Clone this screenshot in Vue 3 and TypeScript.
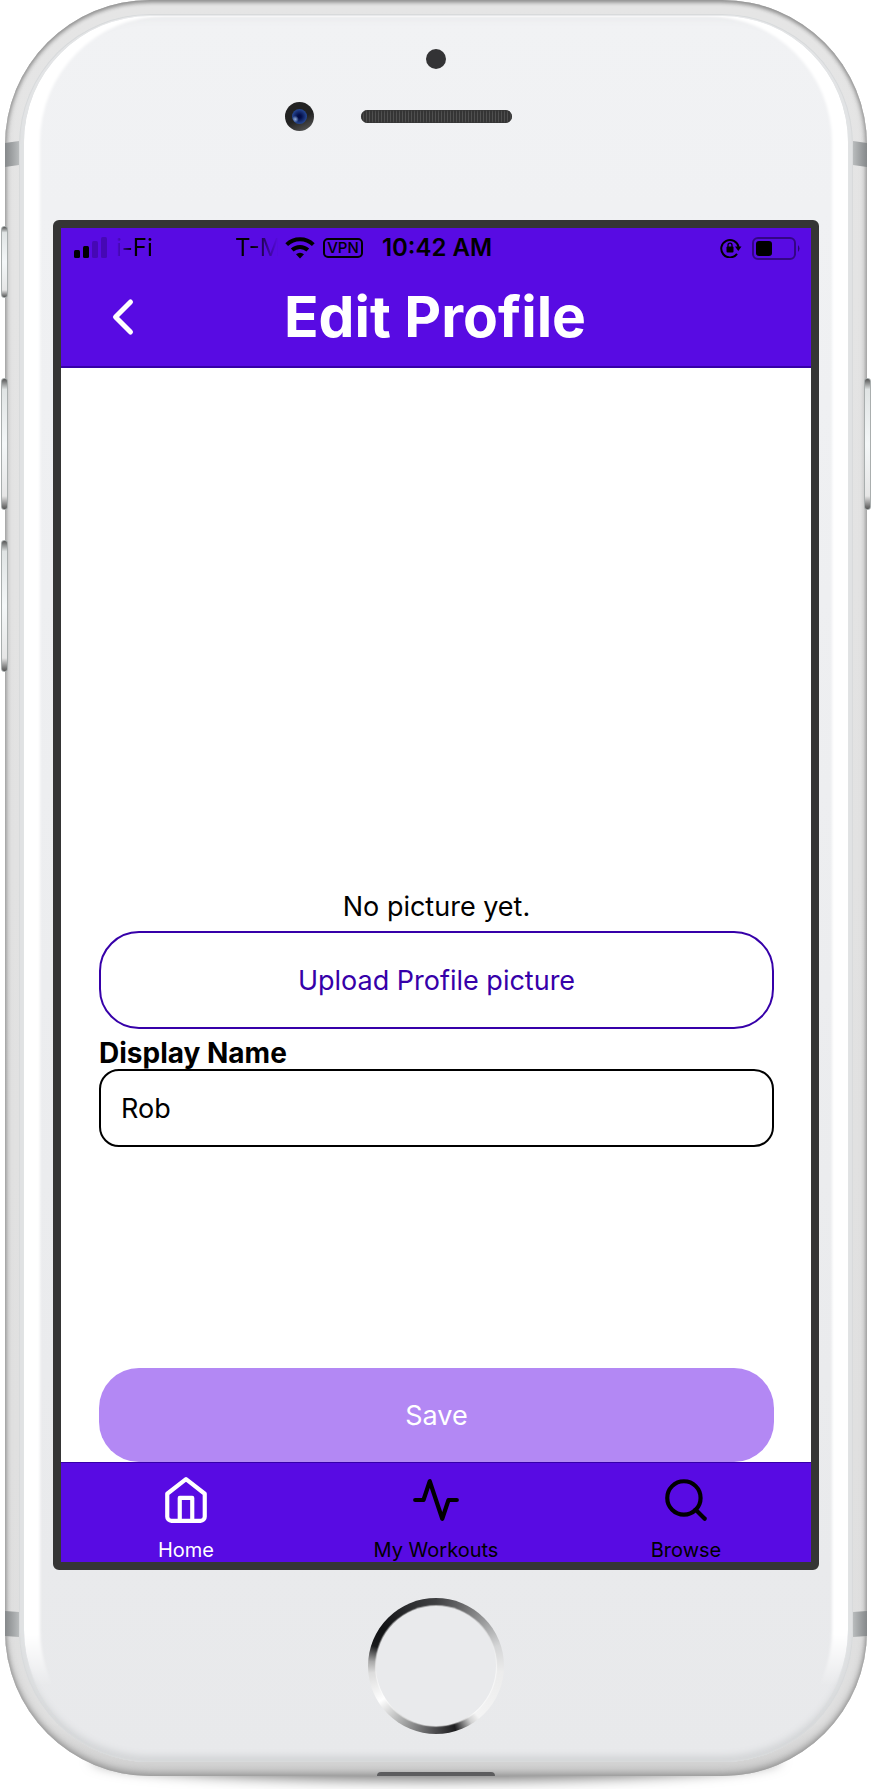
<script setup lang="ts">
import { ref } from 'vue'

interface Tab {
  id: string
  label: string
  paths: string[]
}

const displayName = ref('Rob')
const activeTab = ref('home')

const tabs: Tab[] = [
  {
    id: 'home',
    label: 'Home',
    paths: ['M3 9l9-7 9 7v11a2 2 0 0 1-2 2H5a2 2 0 0 1-2-2z', 'M9 22V11h6v11'],
  },
  { id: 'workouts', label: 'My Workouts', paths: ['M22 12h-4l-3 9L9 3l-3 9H2'] },
  { id: 'browse', label: 'Browse', paths: ['M19 11a8 8 0 1 1-16 0a8 8 0 0 1 16 0z', 'M21 21l-4.35-4.35'] },
]
</script>

<template>
  <div class="stage">
    <div class="phone">
      <span class="key key-left mute"></span>
      <span class="key key-left volume-up"></span>
      <span class="key key-left volume-down"></span>
      <span class="key key-right power"></span>
      <div class="shell">
        <span class="band band-top band-left"></span>
        <span class="band band-top band-right"></span>
        <span class="band band-bottom band-left"></span>
        <span class="band band-bottom band-right"></span>
        <span class="connector"></span>
        <div class="face">
          <div class="forehead">
            <span class="sensor"></span>
            <div class="earpiece">
              <span class="camera"></span>
              <span class="speaker"></span>
            </div>
          </div>

          <div class="screen">
            <div class="status">
              <div class="status-left">
                <svg class="signal" viewBox="0 0 34 22" aria-hidden="true">
                  <rect x="0" y="13" width="6" height="8" rx="1.5" />
                  <rect x="9" y="9" width="6" height="12" rx="1.5" />
                  <rect x="18" y="4" width="6" height="17" rx="1.5" opacity=".2" />
                  <rect x="27" y="0" width="6" height="21" rx="1.5" opacity=".2" />
                </svg>
                <span class="carrier">
                  <span>i-Fi</span>
                  <span class="carrier-next">T-M</span>
                </span>
                <svg class="wifi" viewBox="0 0 30 22" aria-hidden="true">
                  <path d="M15 21.5l-4-4.2a6 6 0 0 1 8 0z" />
                  <path d="M7.2 13a11.5 11.5 0 0 1 15.6 0M1.7 7.6a19.2 19.2 0 0 1 26.6 0" fill="none" stroke="#000" stroke-width="4" />
                </svg>
                <span class="vpn">VPN</span>
              </div>
              <span class="time">10:42 AM</span>
              <div class="status-right">
                <svg class="lock" viewBox="0 0 22 20" aria-hidden="true">
                  <path d="M17 15.8A8.7 8.7 0 1 1 18.5 9" fill="none" stroke="#000" stroke-width="2" />
                  <path d="M15 8.5h6.5L18.3 13z" />
                  <rect x="6.5" y="8.5" width="7" height="6" rx="1" />
                  <path d="M8 9V7.2a2 2 0 0 1 4 0V9" fill="none" stroke="#000" stroke-width="1.3" />
                </svg>
                <svg class="battery" viewBox="0 0 48 23" aria-hidden="true">
                  <rect x="1" y="1" width="42" height="21" rx="5" fill="none" stroke="#000" stroke-opacity=".42" stroke-width="2" />
                  <rect x="4" y="4" width="16" height="15" rx="3" />
                  <path d="M46 8q3 3.500 0 7z" opacity=".5" />
                </svg>
              </div>
            </div>

            <header class="header">
              <button class="back" type="button" aria-label="Back">
                <svg viewBox="0 0 24 24"><path d="M15 18l-6-6 6-6" /></svg>
              </button>
              <h1>Edit Profile</h1>
            </header>

            <form class="content" @submit.prevent>
              <div class="picture"><p>No picture yet.</p></div>
              <button class="upload" type="button">Upload Profile picture</button>
              <label for="display-name">Display Name</label>
              <input id="display-name" v-model="displayName" type="text" />
              <button class="save" type="submit">Save</button>
            </form>

            <nav class="tabs">
              <a
                v-for="tab in tabs"
                :key="tab.id"
                :href="'#' + tab.id"
                :class="{ active: tab.id === activeTab }"
                @click.prevent="activeTab = tab.id"
              >
                <svg viewBox="0 0 24 24" aria-hidden="true">
                  <path v-for="d in tab.paths" :key="d" :d="d" />
                </svg>
                <span>{{ tab.label }}</span>
              </a>
            </nav>
          </div>

          <div class="chin">
            <button class="home-button" type="button" aria-label="Home button"><span></span></button>
          </div>
        </div>
      </div>
    </div>
  </div>
</template>

<style>
body {
  margin: 0;
  background: #fff;
}
</style>

<style scoped>
* {
  box-sizing: border-box;
}

button,
input {
  font: inherit;
  margin: 0;
  cursor: pointer;
}

.stage {
  padding: 0 4px 13px 5px;
  overflow: hidden;
  font: 400 27px/34px Inter, "Liberation Sans", sans-serif;
  color: #000;
}

.phone {
  position: relative;
}

.phone::before {
  content: "";
  position: absolute;
  inset: auto 90px 0;
  height: 40px;
  border-radius: 50%;
  box-shadow: 0 2px 14px 2px rgba(0, 0, 0, 0.55);
}

.shell {
  position: relative;
  padding: 14px;
  border-radius: 145px;
  background: linear-gradient(#e5e5e5, #dfdfdf 97%, #cfcfcf);
  box-shadow:
    inset 0 3px 4px -1px #8f8f8f,
    inset 0 -4px 8px -1px #9c9c9c,
    inset 0 0 5px #8e8e8e;
}

.key {
  position: absolute;
  z-index: 1;
  width: 7px;
  border-radius: 3px;
  border: 1px solid #a9aeae;
  background: linear-gradient(#555, #e0e4e4 8%, #f4f7f8 50%, #e6e6e6 90%, #555);
}

.key-left {
  left: -4px;
}

.key-right {
  right: -4px;
}

.mute {
  top: 226px;
  height: 72px;
}

.volume-up,
.power {
  top: 378px;
  height: 132px;
}

.volume-down {
  top: 540px;
  height: 132px;
}

.band {
  position: absolute;
  width: 14px;
  height: 26px;
  background: linear-gradient(90deg, #85888a, #b9bcbd);
}

.band-left {
  left: 0;
}

.band-right {
  right: 0;
  transform: scaleX(-1);
}

.band-top {
  top: 141px;
  clip-path: polygon(0 2px, 100% 0, 100% 24px, 0 100%);
}

.band-bottom {
  bottom: 139px;
  clip-path: polygon(0 0, 100% 1px, 100% 100%, 0 25px);
}

.connector {
  position: absolute;
  bottom: 0;
  left: 50%;
  width: 118px;
  height: 4px;
  margin-left: -59px;
  border-radius: 8px 8px 0 0;
  background: #5c5c5e;
}

.face {
  position: relative;
  border-radius: 131px;
  background: linear-gradient(#f1f2f4, #e8e9eb);
  box-shadow:
    inset 0 0 0 1px #d8dadb,
    inset 0 4px 8px #e5e6e8,
    inset 0 -6px 7px #d2d4d6,
    inset 5px 0 0 #e2e4e5,
    inset -5px 0 0 #e2e4e5;
}

.face::before {
  content: "";
  position: absolute;
  inset: 2px 5px 6px;
  border-radius: 126px;
  box-shadow: inset 16px 0 3px #fff, inset -16px 0 3px #fff;
  mask-image: linear-gradient(#000 93%, transparent 96%);
}

.forehead {
  position: relative;
  display: flex;
  flex-direction: column;
  align-items: center;
  gap: 33px;
  height: 206px;
  padding-top: 35px;
}

.sensor {
  width: 20px;
  height: 20px;
  border-radius: 50%;
  background: #333335;
}

.earpiece {
  display: grid;
  grid-template-columns: 1fr auto 1fr;
  align-items: center;
  gap: 47px;
  width: 100%;
}

.camera {
  justify-self: end;
  display: grid;
  width: 29px;
  height: 29px;
  padding: 7px;
  border-radius: 50%;
  background: linear-gradient(155deg, #222 55%, #606060);
}

.camera::before {
  content: "";
  border-radius: 50%;
  background:
    radial-gradient(circle at 22% 68%, #8fadda, transparent 22%),
    radial-gradient(circle, #020c45 15%, #294d9b 75%);
}

.speaker {
  width: 151px;
  height: 13px;
  border-radius: 7px;
  background: repeating-linear-gradient(90deg, #353535 0 2px, #505050 2px 3px);
  box-shadow: inset 0 0 2px 1px #353535;
}

.screen {
  position: relative;
  display: flex;
  flex-direction: column;
  margin: 0 34px;
  border: 8px solid #353535;
  border-radius: 6px;
  background: #fff;
}

.status {
  display: grid;
  grid-template-columns: 1fr auto 1fr;
  align-items: center;
  height: 40px;
  padding: 0 11px 0 13px;
  background: #580be3;
  font-size: 24px;
  line-height: 40px;
  white-space: nowrap;
}

.status-left,
.status-right {
  display: flex;
  align-items: center;
}

.status-right {
  justify-content: flex-end;
  gap: 10px;
}

.signal {
  width: 34px;
  height: 22px;
  margin-right: 8px;
}

.carrier {
  display: flex;
  justify-content: space-between;
  width: 162px;
  overflow: hidden;
  mask-image: linear-gradient(90deg, transparent, #000 16px, #000 136px, transparent);
}

.carrier-next {
  width: 43px;
  overflow: hidden;
}

.wifi {
  width: 30px;
  height: 22px;
  margin: 0 8px 0 7px;
}

.vpn {
  width: 40px;
  height: 20px;
  border: 2px solid #000;
  border-radius: 5px;
  font-size: 15px;
  font-weight: 500;
  line-height: 16px;
  text-align: center;
}

.time {
  font-weight: 600;
}

.lock {
  width: 22px;
  height: 20px;
}

.battery {
  width: 48px;
  height: 23px;
}

.header {
  display: grid;
  grid-template-columns: 60px 1fr 60px;
  align-items: center;
  height: 100px;
  padding: 0 34px 0 32px;
  border-bottom: 2px solid #3600a9;
  background: #580be3;
  color: #fff;
}

.back {
  display: flex;
  padding: 0;
  border: 0;
  background: none;
}

svg {
  flex: none;
}

.back svg {
  width: 60px;
  height: 60px;
}

.back svg,
.tabs svg {
  fill: none;
  stroke: currentColor;
  stroke-width: 2;
  stroke-linecap: round;
  stroke-linejoin: round;
}

.back svg {
  stroke: #fff;
}

h1 {
  margin: 0;
  font-size: 57px;
  font-weight: 700;
  line-height: 70px;
  text-align: center;
}

.content {
  display: flex;
  flex-direction: column;
  min-height: 1094px;
  padding: 0 37px 0 38px;
}

.picture {
  display: flex;
  align-items: flex-end;
  justify-content: center;
  min-height: 563px;
  padding-bottom: 7px;
}

.picture p {
  margin: 0;
}

.upload {
  height: 98px;
  margin-bottom: 8px;
  padding: 2px 0 0;
  border: 2px solid #3600a9;
  border-radius: 40px;
  background: #fff;
  color: #3600a9;
}

label {
  font-size: 28px;
  font-weight: 700;
  line-height: 32px;
}

input {
  width: 100%;
  height: 78px;
  padding: 0 20px;
  border: 2px solid #000;
  border-radius: 20px;
  background: #fff;
  color: #000;
  cursor: text;
}

.save {
  height: 94px;
  margin-top: auto;
  padding: 2px 0 0;
  border: 0;
  border-radius: 40px;
  background: #b388f4;
  color: #fff;
}

.tabs {
  display: grid;
  grid-template-columns: repeat(3, 1fr);
  height: 100px;
  border-top: 1px solid #3600a9;
  background: #580be3;
}

.tabs a {
  display: flex;
  flex-direction: column;
  align-items: center;
  gap: 13px;
  padding-top: 12px;
  color: #000;
  font-size: 20px;
  line-height: 24px;
  text-decoration: none;
}

.tabs a.active {
  color: #fff;
}

.tabs svg {
  width: 50px;
  height: 50px;
}

.chin {
  position: relative;
  display: flex;
  justify-content: center;
  height: 192px;
  padding-top: 28px;
}

.home-button {
  display: flex;
  width: 136px;
  height: 136px;
  padding: 8px;
  border: 0;
  border-radius: 50%;
  background: conic-gradient(
    #3f4042, #6b6b6d 25deg, #9c9d9e 48deg, #d4d5d6 72deg, #ececec 95deg, #f4f4f4 140deg,
    #d0d0d0 148deg, #1c1c1e 163deg, #505052 182deg, #a5a6a6 210deg, #fff 238deg,
    #dcdcdc 264deg, #a8a8a8 274deg, #18191b 288deg, #111214 305deg, #2c2d2f 335deg, #3f4042
  );
}

.home-button span {
  flex: 1;
  border-radius: 50%;
  background: #e9eaec;
  box-shadow: 0 0 1px 1px rgba(255, 255, 255, 0.6);
}
</style>
